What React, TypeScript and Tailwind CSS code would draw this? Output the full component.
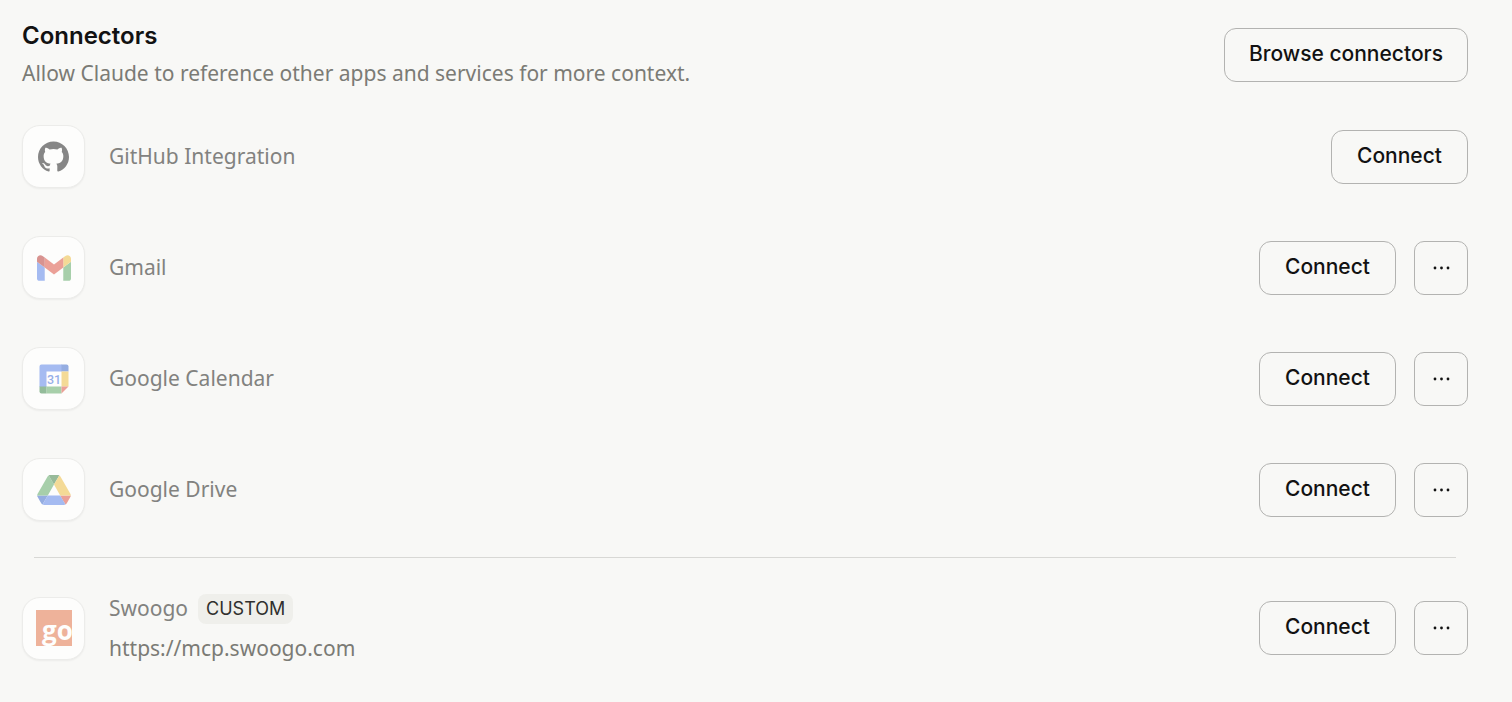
import type { ReactNode } from 'react'
import { clsx } from 'clsx'

type Connector = {
  name: string
  icon: ReactNode
  menu?: boolean
  custom?: boolean
  url?: string
}

function GitHubIcon() {
  return (
    <svg viewBox="0 0 24 24" className="h-[31px] w-[31px]" aria-hidden="true">
      <path
        fill="#121212"
        d="M12 .297c-6.63 0-12 5.373-12 12 0 5.303 3.438 9.8 8.205 11.385.6.113.82-.258.82-.577 0-.285-.01-1.04-.015-2.04-3.338.724-4.042-1.61-4.042-1.61C4.422 18.07 3.633 17.7 3.633 17.7c-1.087-.744.084-.729.084-.729 1.205.084 1.838 1.236 1.838 1.236 1.07 1.835 2.809 1.305 3.495.998.108-.776.417-1.305.76-1.605-2.665-.3-5.466-1.332-5.466-5.93 0-1.31.465-2.38 1.235-3.22-.135-.303-.54-1.523.105-3.176 0 0 1.005-.322 3.3 1.23.96-.267 1.98-.399 3-.405 1.02.006 2.04.138 3 .405 2.28-1.552 3.285-1.23 3.285-1.23.645 1.653.24 2.873.12 3.176.765.84 1.23 1.91 1.23 3.22 0 4.61-2.805 5.625-5.475 5.92.42.36.81 1.096.81 2.22 0 1.606-.015 2.896-.015 3.286 0 .315.21.69.825.57C20.565 22.092 24 17.592 24 12.297c0-6.627-5.373-12-12-12"
      />
    </svg>
  )
}

function GmailIcon() {
  return (
    <svg viewBox="52 42 88 66" className="h-[26px] w-[34px]" aria-hidden="true">
      <path fill="#4f7be7" d="M58 108h14V74L52 59v43c0 3.32 2.69 6 6 6" />
      <path fill="#53a35b" d="M120 108h14c3.32 0 6-2.69 6-6V59l-20 15" />
      <path fill="#edb933" d="M120 48v26l20-15v-8c0-7.42-8.47-11.65-14.4-7.2" />
      <path fill="#db4535" d="M72 74V48l24 18 24-18v26L96 92" />
      <path fill="#b52c26" d="M52 51v8l20 15V48l-5.6-4.2c-5.94-4.45-14.4-.22-14.4 7.2" />
    </svg>
  )
}

function CalendarIcon() {
  return (
    <svg viewBox="0 0 30 30" className="h-[30px] w-[30px]" aria-hidden="true">
      <path fill="#fff" d="M7 7h16v16H7z" />
      <path fill="#4f7be7" d="M2.5 0.5H23v7H7.5V23H0.5V2.5a2 2 0 0 1 2-2z" />
      <path fill="#2f5fc8" d="M22.5 0.5h5a2 2 0 0 1 2 2v5h-7z" />
      <path fill="#edb933" d="M22.5 7.5h7v15h-7z" />
      <path fill="#53a35b" d="M7.5 22.5h15v7h-15z" />
      <path fill="#2c7d3a" d="M0.5 22.5h7v7h-5a2 2 0 0 1-2-2z" />
      <path fill="#db4535" d="M22.5 22.5h7l-7 7z" />
      <text x="15" y="19.5" textAnchor="middle" fontSize="12.5" fontWeight="500" fontFamily="Roboto, sans-serif" fill="#2f63d6">
        31
      </text>
    </svg>
  )
}

function DriveIcon() {
  return (
    <svg viewBox="0 0 87.3 78" className="h-[30px] w-[34px]" aria-hidden="true">
      <path fill="#2f5fc8" d="m6.6 66.85 3.85 6.65c.8 1.4 1.95 2.5 3.3 3.3l13.75-23.8h-27.5c0 1.55.4 3.1 1.2 4.5z" />
      <path fill="#53a35b" d="m43.65 25-13.75-23.8c-1.35.8-2.5 1.9-3.3 3.3l-25.4 44a9.06 9.06 0 0 0 -1.2 4.5h27.5z" />
      <path fill="#db4535" d="m73.55 76.8c1.35-.8 2.5-1.9 3.3-3.3l1.6-2.75 7.65-13.25c.8-1.4 1.2-2.95 1.2-4.5h-27.502l5.852 11.5z" />
      <path fill="#337939" d="m43.65 25 13.75-23.8c-1.35-.8-2.9-1.2-4.5-1.2h-18.5c-1.6 0-3.15.45-4.5 1.2z" />
      <path fill="#4f7be7" d="m59.8 53h-32.3l-13.75 23.8c1.35.8 2.9 1.2 4.5 1.2h50.8c1.6 0 3.15-.45 4.5-1.2z" />
      <path fill="#edb933" d="m73.4 26.5-12.7-22c-.8-1.4-1.95-2.5-3.3-3.3l-13.75 23.8 16.15 28h27.45c0-1.55-.4-3.1-1.2-4.5z" />
    </svg>
  )
}

function SwoogoIcon() {
  return (
    <svg viewBox="0 0 36 36" className="h-9 w-9" aria-hidden="true">
      <path fill="#e06a3b" d="M0 0h36v36H0z" />
      <text x="6" y="29.5" fontSize="26" fontWeight="700" fontFamily="Open Sans, sans-serif" fill="#fff">
        go
      </text>
    </svg>
  )
}

const connectors: Connector[] = [
  { name: 'GitHub Integration', icon: <GitHubIcon /> },
  { name: 'Gmail', icon: <GmailIcon />, menu: true },
  { name: 'Google Calendar', icon: <CalendarIcon />, menu: true },
  { name: 'Google Drive', icon: <DriveIcon />, menu: true },
]

const customConnectors: Connector[] = [
  { name: 'Swoogo', icon: <SwoogoIcon />, menu: true, custom: true, url: 'https://mcp.swoogo.com' },
]

function OutlineButton({ children }: { children: ReactNode }) {
  return (
    <button
      type="button"
      className="h-[54px] min-w-[137px] shrink-0 rounded-xl border border-[#b3b3b1] px-6 pb-0.5 font-['Inter',sans-serif] text-[21px] font-medium text-[#121212] hover:bg-[#efefeb]"
    >
      {children}
    </button>
  )
}

function ConnectorRow({ connector }: { connector: Connector }) {
  const { name, icon, menu, custom, url } = connector
  return (
    <li className="flex items-center gap-6">
      <div className="flex h-[63px] w-[63px] shrink-0 items-center justify-center rounded-[18px] border border-[#ececea] bg-[#fdfdfc] shadow-xs">
        <div className="opacity-50">{icon}</div>
      </div>
      <div className={clsx('min-w-0 flex-1', !url && 'pb-0.5')}>
        <div className="flex items-end gap-2.5 text-[21px] leading-8 text-[#82827f]">
          <span>{name}</span>
          {custom && (
            <span className="rounded-lg bg-[#efefeb] px-2 font-['Inter',sans-serif] text-lg leading-[30px] text-[#30302e]">
              CUSTOM
            </span>
          )}
        </div>
        {url && <p className="pt-2 text-[21px] leading-8 text-[#7b7b75]">{url}</p>}
      </div>
      <div className="flex shrink-0 gap-[18px]">
        <OutlineButton>Connect</OutlineButton>
        {menu && (
          <button
            type="button"
            aria-label={`More options for ${name}`}
            className="flex h-[54px] w-[54px] items-center justify-center rounded-[10px] border border-[#b3b3b1] text-[#121212] hover:bg-[#efefeb]"
          >
            <svg viewBox="0 0 18 4" className="h-1 w-[18px]" fill="currentColor" aria-hidden="true">
              <circle cx="3" cy="2" r="1.4" />
              <circle cx="9.5" cy="2" r="1.4" />
              <circle cx="16" cy="2" r="1.4" />
            </svg>
          </button>
        )}
      </div>
    </li>
  )
}

export default function App() {
  return (
    <main className="min-h-screen bg-[#f8f8f6] pt-4 pr-11 pb-8 pl-[22px] font-['Noto_Sans',sans-serif]">
      <header className="flex items-end justify-between gap-6">
        <div>
          <h1 className="font-['Inter',sans-serif] text-2xl leading-10 font-semibold text-[#121212]">Connectors</h1>
          <p className="pb-1 text-[21px] leading-[34px] text-[#7b7b75]">
            Allow Claude to reference other apps and services for more context.
          </p>
        </div>
        <div className="pb-3">
          <OutlineButton>Browse connectors</OutlineButton>
        </div>
      </header>
      <ul className="mt-[31px] flex flex-col gap-12">
        {connectors.map((connector) => (
          <ConnectorRow key={connector.name} connector={connector} />
        ))}
      </ul>
      <hr className="mx-3 mt-9 mb-[34px] border-[#d8d8d5]" />
      <ul className="flex flex-col gap-12">
        {customConnectors.map((connector) => (
          <ConnectorRow key={connector.name} connector={connector} />
        ))}
      </ul>
    </main>
  )
}
